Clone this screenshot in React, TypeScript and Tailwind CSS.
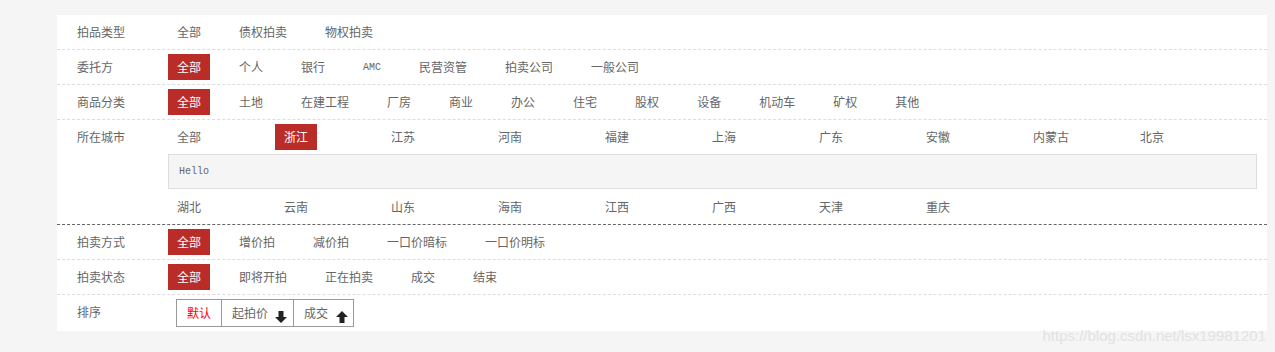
const RED = 'bg-[#b92c28] text-white';

type RowDef = { label: string; items: string[]; active?: number };

const rows: RowDef[] = [
  { label: '拍品类型', items: ['全部', '债权拍卖', '物权拍卖'] },
  { label: '委托方', items: ['全部', '个人', '银行', 'AMC', '民营资管', '拍卖公司', '一般公司'], active: 0 },
  {
    label: '商品分类',
    items: ['全部', '土地', '在建工程', '厂房', '商业', '办公', '住宅', '股权', '设备', '机动车', '矿权', '其他'],
    active: 0,
  },
];

const rowsAfter: RowDef[] = [
  { label: '拍卖方式', items: ['全部', '增价拍', '减价拍', '一口价暗标', '一口价明标'], active: 0 },
  { label: '拍卖状态', items: ['全部', '即将开拍', '正在拍卖', '成交', '结束'], active: 0 },
];

const cities1 = ['全部', '浙江', '江苏', '河南', '福建', '上海', '广东', '安徽', '内蒙古', '北京'];
const cities2 = ['湖北', '云南', '山东', '海南', '江西', '广西', '天津', '重庆'];

const Item = ({ text, active }: { text: string; active?: boolean }) => (
  <span className={`flex h-[26px] items-center px-[9px] ${active ? RED : 'text-[#666]'}`}>
    {/^[A-Za-z]+$/.test(text) ? (
      <span className="font-['Liberation_Mono',monospace] text-[10px]">{text}</span>
    ) : (
      text
    )}
  </span>
);

const Label = ({ text }: { text: string }) => (
  <div className="flex h-[26px] w-[91px] shrink-0 items-center text-[#666]">{text}</div>
);

const Row = ({ row }: { row: RowDef }) => (
  <div className="flex border-b border-dashed border-[#ddd] py-[4px] pl-[20px]">
    <Label text={row.label} />
    <div className="flex gap-[20px]">
      {row.items.map((t, i) => (
        <Item key={t} text={t} active={row.active === i} />
      ))}
    </div>
  </div>
);

const ArrowDown = () => (
  <svg width="12" height="12" viewBox="0 0 12 12" className="shrink-0">
    <path d="M3.5 0h5v6H12l-6 6-6-6h3.5z" fill="#222" />
  </svg>
);

const ArrowUp = () => (
  <svg width="12" height="12" viewBox="0 0 12 12" className="shrink-0">
    <path d="M6 0l6 6H8.5v6h-5V6H0z" fill="#222" />
  </svg>
);

export default function App() {
  return (
    <div className="relative h-[352px] bg-[#f5f5f5] pt-[15px] font-['Noto_Sans_CJK_SC',sans-serif] text-[12px]">
      <div className="ml-[57px] w-[1210px] bg-white">
        {rows.map((r) => (
          <Row key={r.label} row={r} />
        ))}

        <div className="flex border-b border-dashed border-[#666] py-[4px] pl-[20px]">
          <Label text="所在城市" />
          <div className="flex flex-col">
            <div className="flex">
              {cities1.map((c, i) => (
                <div key={c} className="w-[107px]">
                  <span className="inline-flex">
                    <Item text={c} active={i === 1} />
                  </span>
                </div>
              ))}
            </div>
            <div className="mt-[4px] flex h-[35px] w-[1089px] items-center border border-[#ddd] bg-[#f5f5f5] pl-[10px] font-['Liberation_Mono',monospace] text-[10px] text-[#666]">
              Hello
            </div>
            <div className="mt-[5px] flex">
              {cities2.map((c) => (
                <div key={c} className="w-[107px]">
                  <span className="inline-flex">
                    <Item text={c} />
                  </span>
                </div>
              ))}
            </div>
          </div>
        </div>

        {rowsAfter.map((r) => (
          <Row key={r.label} row={r} />
        ))}

        <div className="flex py-[4px] pl-[20px]">
          <Label text="排序" />
          <div className="ml-[8px] flex h-[28px] border border-[#999] text-[#666]">
            <div className="flex w-[44px] items-center pl-[10px] text-[#f00]">默认</div>
            <div className="flex w-[72px] items-center border-l border-[#999] pl-[10px]">
              <span>起拍价</span>
              <span className="ml-[7px] mt-[7px]">
                <ArrowDown />
              </span>
            </div>
            <div className="flex w-[60px] items-center border-l border-[#999] pl-[10px]">
              <span>成交</span>
              <span className="ml-[8px] mt-[7px]">
                <ArrowUp />
              </span>
            </div>
          </div>
        </div>
      </div>

      <div className="absolute right-[9px] top-[325px] font-['Liberation_Sans',sans-serif] text-[15px] text-[#e2e2e2]">
        https://blog.csdn.net/lsx19981201
      </div>
    </div>
  );
}
